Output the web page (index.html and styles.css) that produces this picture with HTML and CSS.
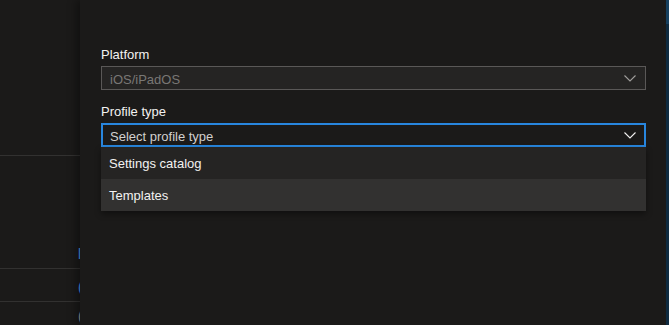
FILE: index.html
```html
<!DOCTYPE html>
<html lang="en">
<head>
    <meta charset="UTF-8">
    <title>Create a profile</title>
    <link rel="stylesheet" href="styles.css">
</head>
<body>
    <div class="behind">
        <div class="behind-row tall"><span class="peek link">l</span></div>
        <div class="behind-row"><span class="peek link">(</span></div>
        <div class="behind-row last"><span class="peek">(</span></div>
    </div>

    <!-- create profile blade -->
    <div class="blade">
        <div class="blade-body">
            <div class="field">
                <label class="field-label">Platform</label>
                <div class="select disabled">
                    <span>iOS/iPadOS</span>
                    <svg class="chevron" viewBox="0 0 12 7"><path d="M0.5 0.5 L6 6 L11.5 0.5"/></svg>
                </div>
            </div>
            <div class="field">
                <label class="field-label">Profile type</label>
                <div class="select open">
                    <span>Select profile type</span>
                    <svg class="chevron" viewBox="0 0 12 7"><path d="M0.5 0.5 L6 6 L11.5 0.5"/></svg>
                </div>
                <div class="dropdown">
                    <div class="option">Settings catalog</div>
                    <div class="option hover">Templates</div>
                </div>
            </div>
        </div>
        <div class="scroll-track"><div class="scroll-thumb"></div></div>
    </div>
</body>
</html>
```

FILE: styles.css
```css
* {
    margin: 0;
    padding: 0;
    box-sizing: border-box;
}

body {
    font-family: "Liberation Sans", Arial, sans-serif;
    font-size: 13px;
    background: #1b1a19;
    color: #f3f2f1;
    width: 669px;
    height: 325px;
    overflow: hidden;
    position: relative;
}

.behind {
    width: 80px;
    height: 325px;
    padding-top: 155px;
    overflow: hidden;
}

.behind-row {
    height: 33px;
    border-top: 1px solid #323130;
    position: relative;
}

.behind-row.tall {
    height: 113px;
}

.behind-row.last {
    height: 24px;
}

.peek {
    position: absolute;
    left: 78px;
    bottom: 6px;
    line-height: 16px;
    font-size: 14px;
    color: #a19f9d;
}

.peek.link {
    color: #479ef5;
}

.behind-row.last .peek {
    bottom: 1px;
}

/* blade laid over the page */
.blade {
    position: absolute;
    top: 0;
    left: 80px;
    right: 0;
    bottom: 0;
    background: #1b1a19;
    box-shadow: -4px 0 8px rgba(0, 0, 0, 0.35);
    display: flex;
}

.blade-body {
    flex: 1;
    padding: 45px 20px 0 21px;
}

.field {
    margin-bottom: 12px;
}

.field-label {
    display: block;
    line-height: 18px;
    padding-top: 1px;
    margin-bottom: 2px;
    color: #f3f2f1;
}

.select {
    height: 24px;
    border: 1px solid #605e5c;
    background: #252423;
    display: flex;
    align-items: center;
    justify-content: space-between;
    padding: 2px 9px 0 8px;
    color: #d2d0ce;
}

.select .chevron {
    margin-top: -2px;
}

.select.disabled {
    color: #797775;
    border-color: #5a5857;
    background: #252423;
}

.select.open {
    border: 2px solid #2886de;
    padding-left: 7px;
    padding-right: 8px;
    background: #1b1a19;
}

.chevron {
    width: 12px;
    height: 7px;
    fill: none;
    stroke: #a19f9d;
    stroke-width: 1.1;
}

.select.open .chevron {
    stroke: #f3f2f1;
}

.dropdown {
    background: #252423;
    box-shadow: 0 3px 6px rgba(0, 0, 0, 0.4);
}

.option {
    height: 32px;
    line-height: 30px;
    padding: 2px 0 0 8px;
    color: #f3f2f1;
}

.option.hover {
    background: #323130;
}

.scroll-track {
    width: 3px;
    background: #0f2b40;
}

.scroll-thumb {
    height: 24px;
    background: #16405f;
}
```
